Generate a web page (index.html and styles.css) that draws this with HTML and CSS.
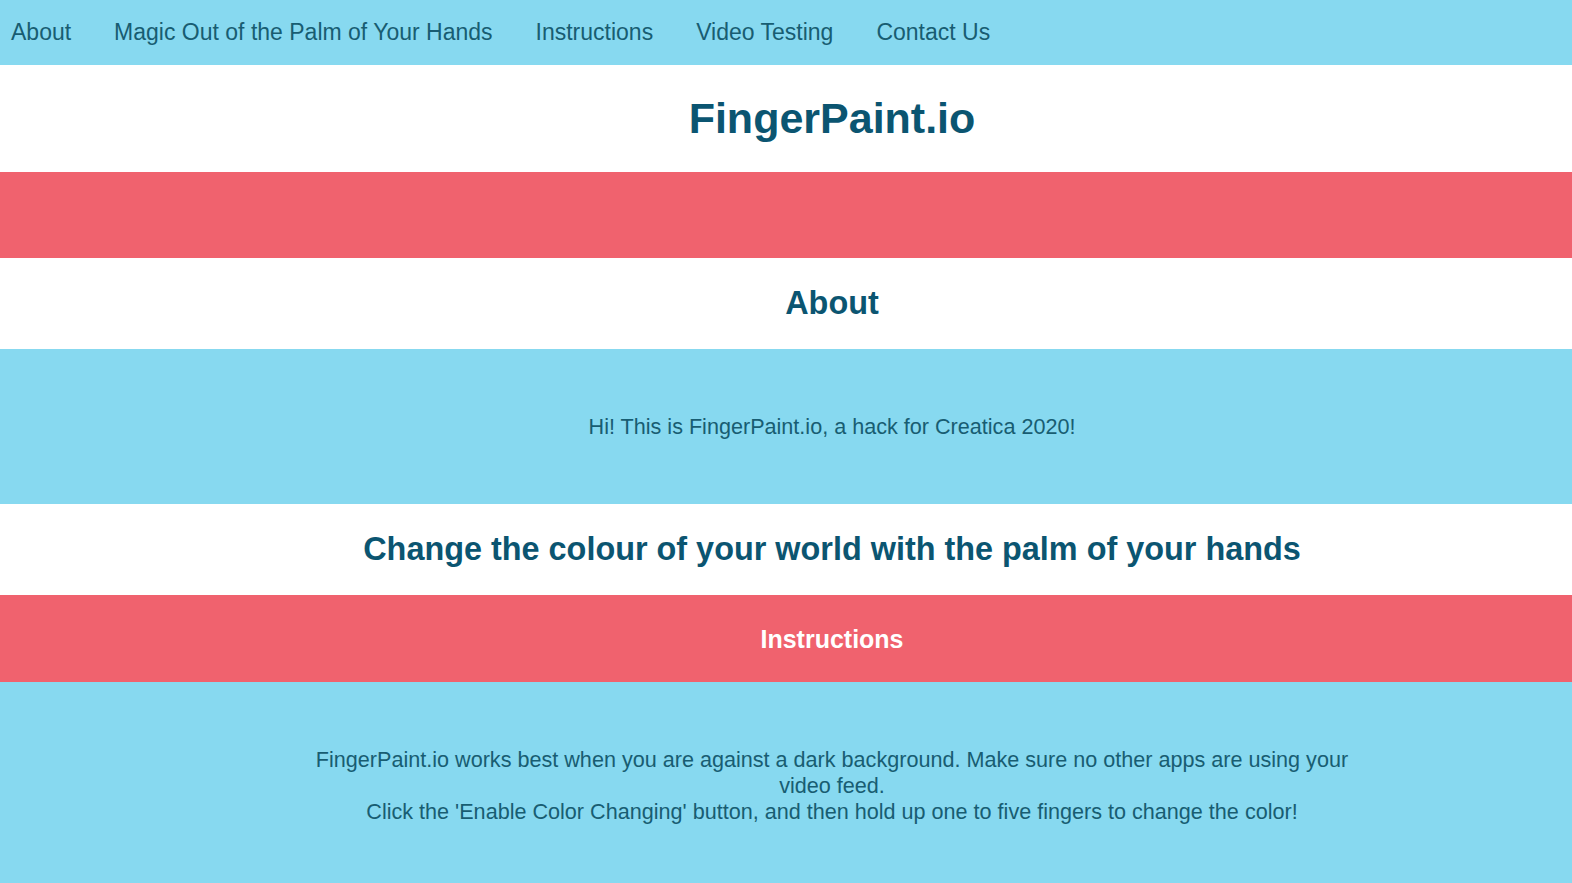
FILE: index.html
```html
<!DOCTYPE html>
<html lang="en">
<head>
<meta charset="utf-8">
<title>FingerPaint.io</title>
<link rel="stylesheet" href="styles.css">
</head>
<body>
<nav class="topnav">
  <a class="nav-link" href="#about">About</a>
  <a class="nav-link" href="#magic">Magic Out of the Palm of Your Hands</a>
  <a class="nav-link" href="#instructions">Instructions</a>
  <a class="nav-link" href="#video">Video Testing</a>
  <a class="nav-link" href="#contact">Contact Us</a>
</nav>
<header class="band band-white band-title">
  <h1 class="site-title">FingerPaint.io</h1>
</header>
<div class="band band-red band-empty"></div>
<section class="band band-white band-heading" id="about">
  <h2 class="section-title">About</h2>
</section>
<section class="band band-blue band-text">
  <p class="body-text">Hi! This is FingerPaint.io, a hack for Creatica 2020!</p>
</section>
<section class="band band-white band-heading" id="magic">
  <h2 class="section-title">Change the colour of your world with the palm of your hands</h2>
</section>
<section class="band band-red band-sub" id="instructions">
  <h3 class="sub-title">Instructions</h3>
</section>
<section class="band band-blue band-text band-long">
  <p class="body-text narrow">FingerPaint.io works best when you are against a dark background. Make sure no other apps are using your video feed.<br>Click the 'Enable Color Changing' button, and then hold up one to five fingers to change the color!</p>
</section>
</body>
</html>
```
FILE: styles.css
```css
html {
  overflow-x: hidden;
  scrollbar-width: none;
}
html::-webkit-scrollbar { display: none; }
body {
  margin: 0;
  font-family: "Liberation Sans", Arial, sans-serif;
  color: #0b5571;
  background: #ffffff;
}
.topnav {
  display: flex;
  align-items: center;
  gap: 43px;
  height: 65px;
  padding: 0 11px;
  background: #87d9f0;
}
.nav-link {
  font-size: 23px;
  color: #185d72;
  text-decoration: none;
  line-height: 26px;
  padding-bottom: 2px;
}
.band {
  width: 100%;
  padding: 0 46px;
  text-align: center;
}
.band-white { background: #ffffff; }
.band-red { background: #f0626e; }
.band-blue { background: #87d9f0; }
.band-title {
  height: 107px;
  display: flex;
  align-items: center;
  justify-content: center;
}
.site-title {
  margin: 0;
  font-size: 43px;
  font-weight: bold;
  line-height: 50px;
  padding-bottom: 2px;
  color: #0b5571;
}
.band-empty { height: 86px; }
.band-heading {
  height: 91px;
  display: flex;
  align-items: center;
  justify-content: center;
}
.section-title {
  margin: 0;
  font-size: 32.4px;
  font-weight: bold;
  line-height: 38px;
  padding-bottom: 2px;
  color: #0b5571;
}
.band-sub {
  height: 87px;
  display: flex;
  align-items: center;
  justify-content: center;
}
.sub-title {
  margin: 0;
  font-size: 25px;
  font-weight: bold;
  color: #ffffff;
  line-height: 28px;
}
.band-text {
  padding-top: 64px;
  padding-bottom: 64px;
}
.band-long { padding-top: 64px; padding-bottom: 120px; }
.body-text {
  margin: 0 auto;
  font-size: 21.6px;
  line-height: 26px;
  padding-top: 1px;
  color: #185d72;
}
.narrow { max-width: 1048px; }
```
